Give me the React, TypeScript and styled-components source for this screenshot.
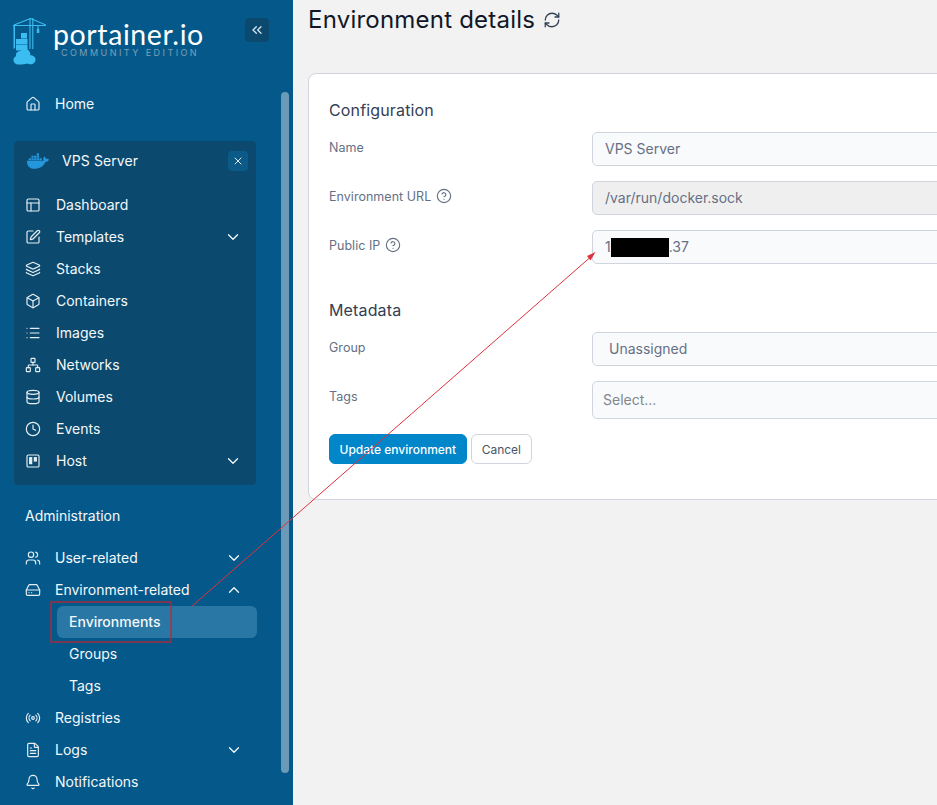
import React from 'react'
import styled, { createGlobalStyle } from 'styled-components'
import {
    Bell,
    Box,
    ChevronDown,
    ChevronUp,
    ChevronsLeft,
    CircleHelp,
    Clock,
    Database,
    FileText,
    HardDrive,
    House,
    Layers,
    List,
    Network,
    PanelsTopLeft,
    Radio,
    RefreshCw,
    SquarePen,
    Users,
    X,
} from 'lucide-react'
import { FaDocker } from 'react-icons/fa'

const GlobalStyle = createGlobalStyle`
    html, body {
        margin: 0;
        padding: 0;
        width: 937px;
        height: 805px;
        overflow: hidden;
        background: #f2f2f2;
        font-family: Inter, "Liberation Sans", sans-serif;
    }
    * {
        box-sizing: border-box;
    }
`

const Page = styled.div`
    position: relative;
    display: flex;
    width: 937px;
    height: 805px;
    overflow: hidden;
`

const Sidebar = styled.aside`
    position: relative;
    flex: 0 0 293px;
    height: 805px;
    background: #05598a;
    color: #f4f8fb;
    overflow: hidden;
`

const ScrollThumb = styled.div`
    position: absolute;
    left: 281px;
    top: 92px;
    width: 8px;
    height: 681px;
    border-radius: 4px;
    background: #6b9ab8;
`

const Brand = styled.div`
    display: flex;
    align-items: flex-start;
    height: 88px;
    padding: 18px 24px 0 13px;
`

const BrandText = styled.div`
    display: flex;
    flex-direction: column;
    margin-left: 7px;
    margin-top: 2px;
`

const BrandName = styled.div`
    font-family: Lato, sans-serif;
    font-size: 28.5px;
    line-height: 28px;
    letter-spacing: 0.6px;
    color: #ffffff;
`

const BrandEdition = styled.div`
    font-family: Inter, sans-serif;
    font-size: 9px;
    line-height: 10px;
    letter-spacing: 2.45px;
    color: #7f9fb8;
    margin-left: 8px;
`

const CollapseButton = styled.div`
    display: flex;
    align-items: center;
    justify-content: center;
    width: 24px;
    height: 24px;
    margin-left: auto;
    border-radius: 4px;
    background: #0b4a6e;
    color: #d5e3ec;
`

const NavList = styled.div`
    display: flex;
    flex-direction: column;
    padding-left: 25px;
    width: 257px;
`

const NavRow = styled.div<{ $boxed?: boolean }>`
    display: flex;
    align-items: center;
    height: 32px;
    font-size: 14px;
    color: #f4f8fb;
    padding-right: 14px;
    padding-left: ${({ $boxed }) => ($boxed ? '11px' : '0')};

    svg {
        stroke-width: 1.75;
    }
`

const NavIcon = styled.span<{ $boxed?: boolean }>`
    display: flex;
    width: ${({ $boxed }) => ($boxed ? '31px' : '30px')};
    flex: 0 0 auto;
    color: #e6eef4;
`

const NavLabel = styled.span`
    flex: 1;
    margin-bottom: 2px;
`

const SubRow = styled.div<{ $active?: boolean }>`
    display: flex;
    align-items: center;
    height: 32px;
    margin-left: 32px;
    padding: 0 0 2px 12px;
    border-radius: 6px;
    font-size: 14px;
    font-weight: ${({ $active }) => ($active ? 500 : 400)};
    color: #f4f8fb;
    background: ${({ $active }) => ($active ? '#2877a4' : 'transparent')};
`

const EnvironmentBox = styled.div`
    display: flex;
    flex-direction: column;
    width: 242px;
    margin: 21px 0 0 14px;
    padding-bottom: 8px;
    border-radius: 4px;
    background: #0b4a6e;
`

const EnvironmentHeader = styled.div`
    display: flex;
    align-items: center;
    height: 48px;
    padding: 0 8px 8px 13px;
    font-size: 14px;
`

const EnvironmentName = styled.span`
    flex: 1;
    margin: 0 0 2px 13px;
    letter-spacing: 0.1px;
`

const CloseButton = styled.div`
    display: flex;
    align-items: center;
    justify-content: center;
    width: 20px;
    height: 20px;
    border-radius: 4px;
    background: #0b5a87;
    color: #dfe9f0;
`

const SectionLabel = styled.div`
    height: 20px;
    margin: 21px 0 16px 25px;
    font-size: 14px;
    line-height: 20px;
`

const Main = styled.main`
    flex: 1;
    min-width: 0;
    padding: 0 0 0 15px;
`

const TitleRow = styled.div`
    display: flex;
    align-items: center;
    gap: 8px;
    height: 40px;
    margin-bottom: 33px;
    color: #101828;
`

const Title = styled.h1`
    margin: 0;
    font-size: 24px;
    font-weight: 400;
    line-height: 40px;
    letter-spacing: 0.22px;
`

const Card = styled.div`
    width: 720px;
    height: 427px;
    padding: 26px 20px 0;
    border: 1px solid #d0d5dd;
    border-radius: 8px;
    background: #ffffff;
`

const SectionTitle = styled.h2<{ $spaced?: boolean }>`
    margin: ${({ $spaced }) => ($spaced ? '36px' : '0')} 0 0;
    height: 20px;
    font-size: 16px;
    line-height: 20px;
    font-weight: 400;
    letter-spacing: 0.15px;
    color: #344054;
`

const FormRow = styled.div<{ $first?: boolean }>`
    display: grid;
    grid-template-columns: 263px 1fr;
    margin-top: ${({ $first }) => ($first ? '12px' : '15px')};
`

const FieldLabel = styled.label`
    display: flex;
    align-items: center;
    gap: 5px;
    height: 30px;
    font-size: 12.5px;
    letter-spacing: 0.03px;
    color: #667085;
`

const InputBox = styled.div<{ $disabled?: boolean; $tall?: boolean; $indent?: number }>`
    display: flex;
    align-items: center;
    height: ${({ $tall }) => ($tall ? '38px' : '34px')};
    padding-left: ${({ $indent }) => $indent ?? 12}px;
    padding-bottom: 2px;
    border: 1px solid #d0d5dd;
    border-radius: 5px;
    font-size: 14px;
    color: ${({ $tall }) => ($tall ? '#808791' : '#667085')};
    background: ${({ $disabled }) => ($disabled ? '#efefef' : '#f9fafb')};
`

const Redaction = styled.span`
    display: inline-block;
    width: 58px;
    height: 19px;
    margin-top: 2px;
    background: #000000;
`

const ButtonRow = styled.div`
    display: flex;
    gap: 4px;
    margin-top: 15px;
`

const Button = styled.button<{ $primary?: boolean }>`
    height: 30px;
    padding: 0 ${({ $primary }) => ($primary ? '9.5px' : '10px')};
    border: 1px solid ${({ $primary }) => ($primary ? '#0086c9' : '#d0d5dd')};
    border-radius: 6px;
    font-family: Inter, sans-serif;
    font-size: 12px;
    font-weight: ${({ $primary }) => ($primary ? 500 : 400)};
    color: ${({ $primary }) => ($primary ? '#ffffff' : '#475467')};
    background: ${({ $primary }) => ($primary ? '#0086c9' : '#ffffff')};
`

const Annotation = styled.svg`
    position: absolute;
    left: 0;
    top: 0;
    pointer-events: none;
`

const PortainerLogo = () => (
    <svg width="33" height="47" viewBox="0 0 33 47" fill="none">
        <g stroke="#3bbdf2" strokeWidth="1.1">
            <path d="M0 7.500h33" />
            <path d="M1 7 17.500 0.500 33 7" />
            <path d="M17 0v31" />
            <path d="M19.800 0v31" />
            <path d="M25 7.500v4" />
        </g>
        <g fill="#3bbdf2">
            <rect x="0.500" y="7.500" width="1.500" height="23" />
            <rect x="8" y="15" width="6" height="5.500" />
            <rect x="3" y="21" width="11.500" height="5" />
            <rect x="3" y="26.500" width="11.500" height="6" />
            <rect x="23.800" y="11" width="2.500" height="4" />
        </g>
        <path
            d="M6 46.500c-3.500 0-5.500-2-5.500-4.500 0-2 1-3.300 2.600-3.800-.6-2.800 1.300-5.200 4.400-5.200 1.500-2.300 6-2.800 8.200-.4 1.800 2 1.700 3.400 1.500 4.600 2.500-.2 5.300 1.400 5.300 4.300 0 3-2.300 4.800-5 4.800-1.500 0-2.400-.4-3.200-.8C12 46.200 9.300 46.500 6 46.500Z"
            fill="#3bbdf2"
        />
    </svg>
)

const HostIcon = () => (
    <svg width="16" height="16" viewBox="0 0 24 24" fill="none" stroke="currentColor" strokeWidth="2">
        <rect x="3" y="3" width="18" height="18" rx="2" />
        <rect x="7" y="7" width="3" height="9" fill="currentColor" />
        <rect x="14" y="7" width="3" height="5" fill="currentColor" />
    </svg>
)

const environmentItems = [
    { label: 'Dashboard', icon: <PanelsTopLeft size={16} /> },
    { label: 'Templates', icon: <SquarePen size={16} />, chevron: true },
    { label: 'Stacks', icon: <Layers size={16} /> },
    { label: 'Containers', icon: <Box size={16} /> },
    { label: 'Images', icon: <List size={16} /> },
    { label: 'Networks', icon: <Network size={16} /> },
    { label: 'Volumes', icon: <Database size={16} /> },
    { label: 'Events', icon: <Clock size={16} /> },
    { label: 'Host', icon: <HostIcon />, chevron: true },
]

const App: React.FC = () => {
    return (
        <Page>
            <GlobalStyle />
            <Sidebar>
                <ScrollThumb />
                <Brand>
                    <PortainerLogo />
                    <BrandText>
                        <BrandName>portainer.io</BrandName>
                        <BrandEdition>COMMUNITY EDITION</BrandEdition>
                    </BrandText>
                    <CollapseButton>
                        <ChevronsLeft size={16} />
                    </CollapseButton>
                </Brand>
                <NavList>
                    <NavRow>
                        <NavIcon>
                            <House size={16} />
                        </NavIcon>
                        <NavLabel>Home</NavLabel>
                    </NavRow>
                </NavList>
                <EnvironmentBox>
                    <EnvironmentHeader>
                        <FaDocker size={22} color="#2496dc" />
                        <EnvironmentName>VPS Server</EnvironmentName>
                        <CloseButton>
                            <X size={12} />
                        </CloseButton>
                    </EnvironmentHeader>
                    {environmentItems.map((item) => (
                        <NavRow $boxed key={item.label}>
                            <NavIcon $boxed>{item.icon}</NavIcon>
                            <NavLabel>{item.label}</NavLabel>
                            {item.chevron && <ChevronDown size={18} />}
                        </NavRow>
                    ))}
                </EnvironmentBox>
                <SectionLabel>Administration</SectionLabel>
                <NavList>
                    <NavRow>
                        <NavIcon>
                            <Users size={16} />
                        </NavIcon>
                        <NavLabel>User-related</NavLabel>
                        <ChevronDown size={18} />
                    </NavRow>
                    <NavRow>
                        <NavIcon>
                            <HardDrive size={16} />
                        </NavIcon>
                        <NavLabel>Environment-related</NavLabel>
                        <ChevronUp size={18} />
                    </NavRow>
                    <SubRow $active>Environments</SubRow>
                    <SubRow>Groups</SubRow>
                    <SubRow>Tags</SubRow>
                    <NavRow>
                        <NavIcon>
                            <Radio size={16} />
                        </NavIcon>
                        <NavLabel>Registries</NavLabel>
                    </NavRow>
                    <NavRow>
                        <NavIcon>
                            <FileText size={16} />
                        </NavIcon>
                        <NavLabel>Logs</NavLabel>
                        <ChevronDown size={18} />
                    </NavRow>
                    <NavRow>
                        <NavIcon>
                            <Bell size={16} />
                        </NavIcon>
                        <NavLabel>Notifications</NavLabel>
                    </NavRow>
                </NavList>
            </Sidebar>
            <Main>
                <TitleRow>
                    <Title>Environment details</Title>
                    <RefreshCw size={18} color="#344054" strokeWidth={1.7} />
                </TitleRow>
                <Card>
                    <SectionTitle>Configuration</SectionTitle>
                    <FormRow $first>
                        <FieldLabel>Name</FieldLabel>
                        <InputBox>VPS Server</InputBox>
                    </FormRow>
                    <FormRow>
                        <FieldLabel>
                            Environment URL <CircleHelp size={16} strokeWidth={1.7} />
                        </FieldLabel>
                        <InputBox $disabled>/var/run/docker.sock</InputBox>
                    </FormRow>
                    <FormRow>
                        <FieldLabel>
                            Public IP <CircleHelp size={16} strokeWidth={1.7} />
                        </FieldLabel>
                        <InputBox>
                            1<Redaction />.37
                        </InputBox>
                    </FormRow>
                    <SectionTitle $spaced>Metadata</SectionTitle>
                    <FormRow $first>
                        <FieldLabel>Group</FieldLabel>
                        <InputBox $indent={16}>Unassigned</InputBox>
                    </FormRow>
                    <FormRow>
                        <FieldLabel>Tags</FieldLabel>
                        <InputBox $tall $indent={10}>
                            Select...
                        </InputBox>
                    </FormRow>
                    <ButtonRow>
                        <Button $primary>Update environment</Button>
                        <Button>Cancel</Button>
                    </ButtonRow>
                </Card>
            </Main>
            <Annotation width="937" height="805" viewBox="0 0 937 805" fill="none">
                <rect x="51" y="602" width="120" height="40" stroke="#c8222c" strokeWidth="1.2" />
                <path d="M191 607 590 257.500" stroke="#e0323a" strokeWidth="1" />
                <path d="M595.500 252 587 256 590.500 260.500Z" fill="#e0323a" />
            </Annotation>
        </Page>
    )
}

export default App
